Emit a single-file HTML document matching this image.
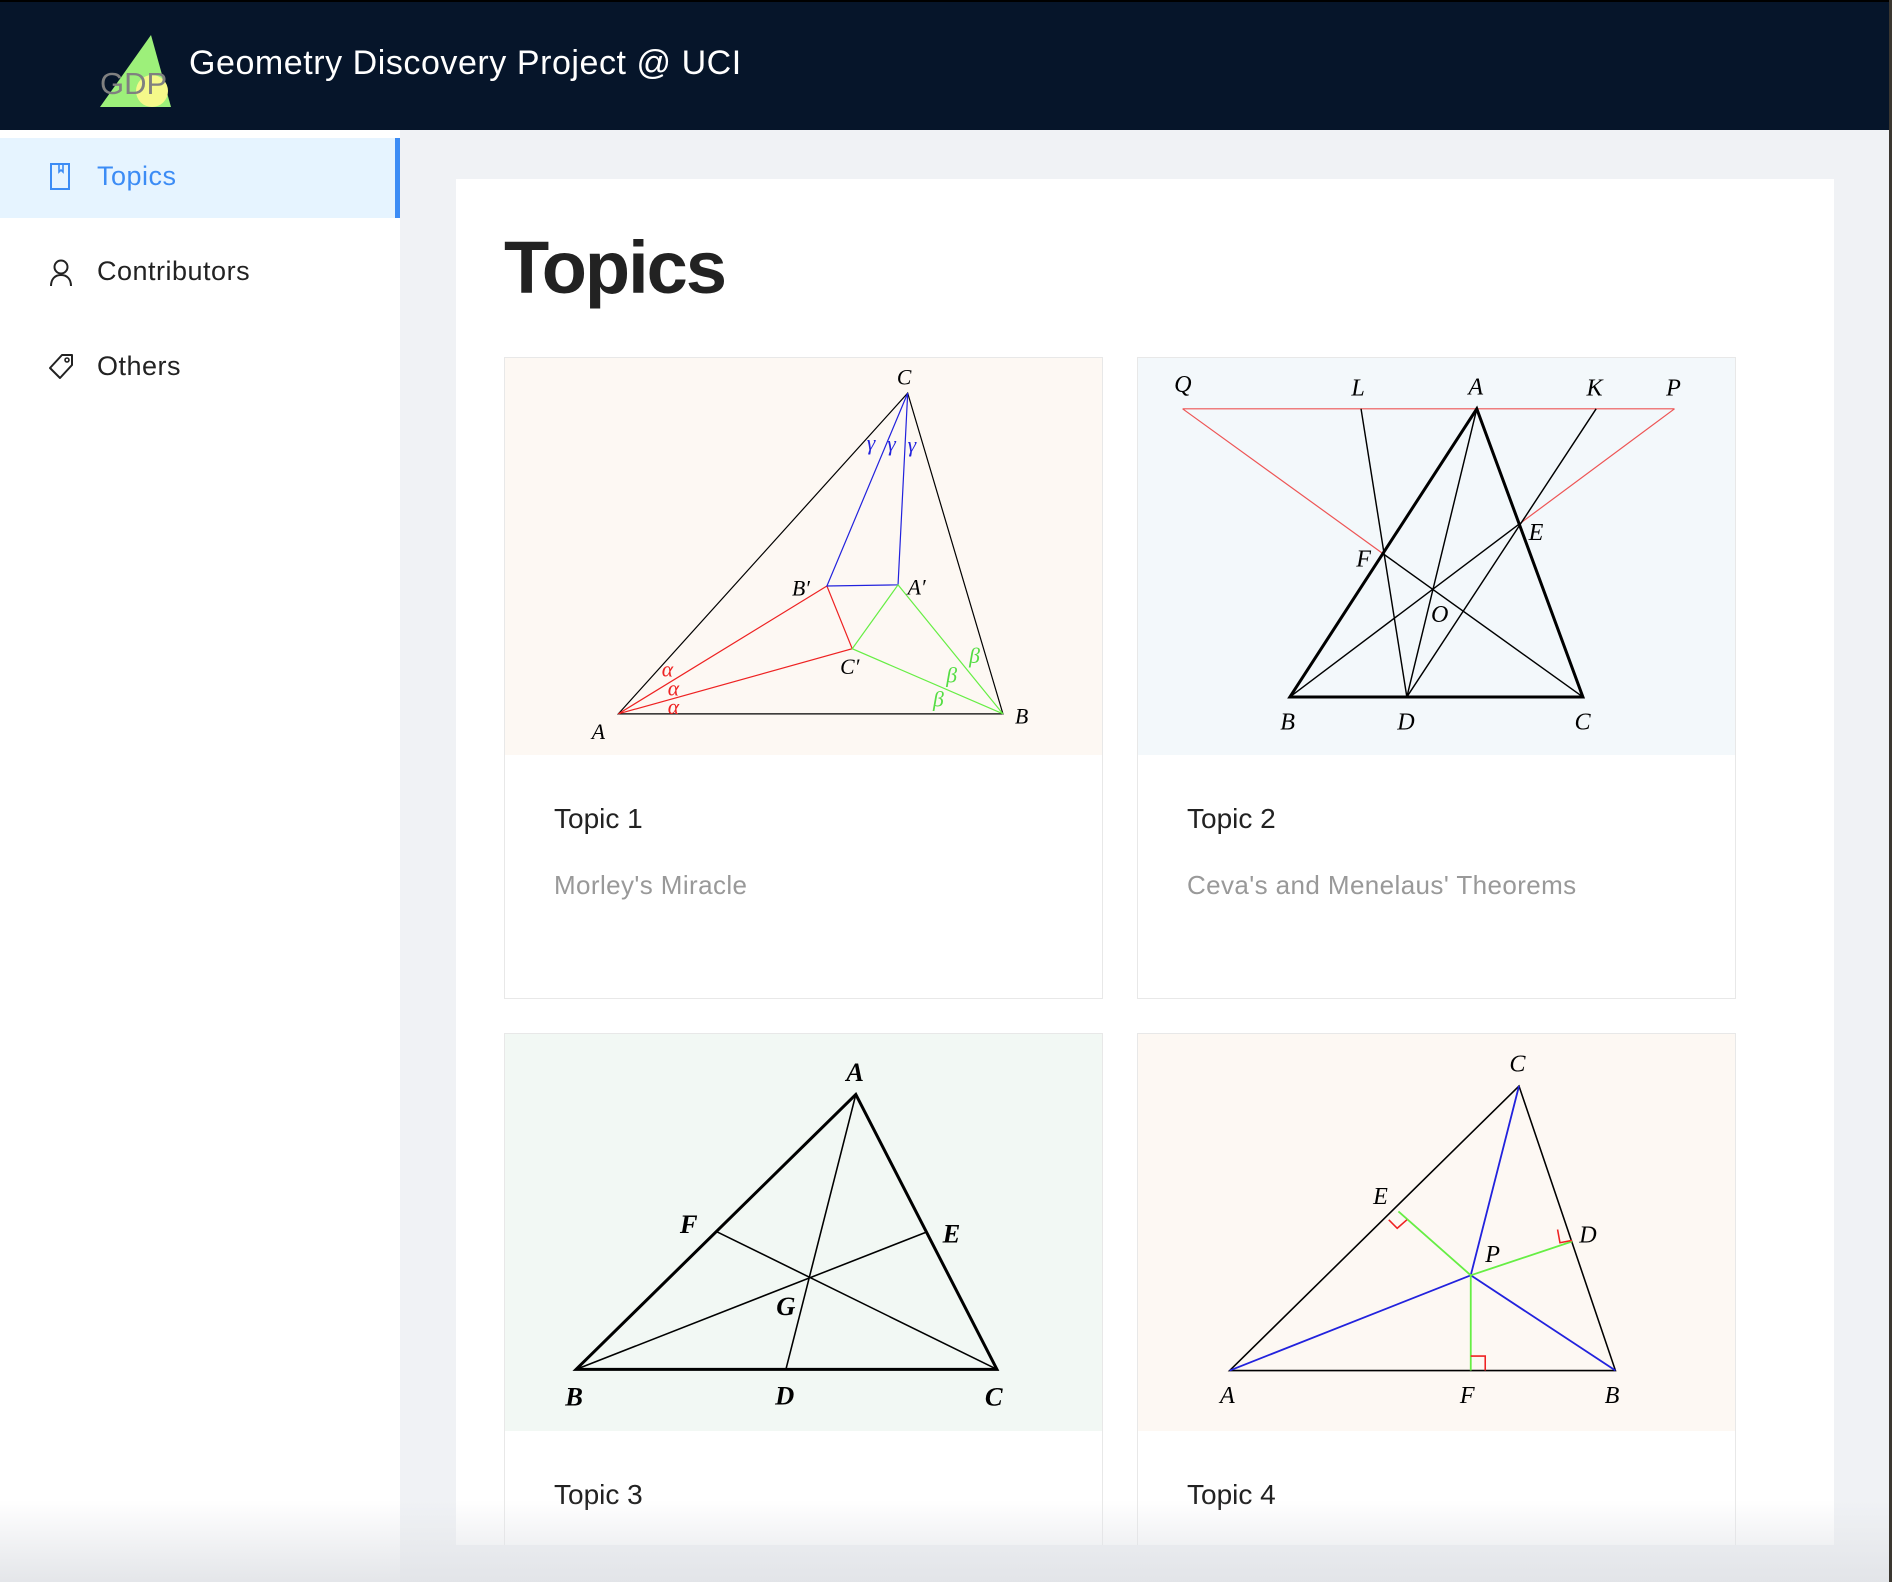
<!DOCTYPE html>
<html><head><meta charset="utf-8"><style>
*{margin:0;padding:0;box-sizing:border-box}
html,body{width:1892px;height:1582px;overflow:hidden}
body{background:#f0f2f5;font-family:"Liberation Sans",sans-serif;position:relative}
.hdr{position:absolute;left:0;top:0;width:1892px;height:130px;background:#06152a;border-top:2px solid #000}
.title{position:absolute;left:189px;top:42px;color:#fff;font-size:34px;letter-spacing:0.55px}
.side{position:absolute;left:0;top:130px;width:400px;height:1452px;background:#fff}
.sel{position:absolute;left:0;top:8px;width:400px;height:80px;background:#e6f4ff;border-right:5px solid #3c8cf5}
.item{position:absolute;left:97px;font-size:27px;letter-spacing:0.5px;color:#222}
.ico{position:absolute;left:48px}
.main{position:absolute;left:456px;top:179px;width:1378px;height:1366px;background:#fff;overflow:hidden}
h1{position:absolute;left:48px;top:46px;font-size:74px;font-weight:bold;color:#222;letter-spacing:-2px}
.card{position:absolute;width:599px;height:642px;border:1px solid #e8e8e8;background:#fff;overflow:hidden}
.card svg{display:block}
.ct{position:absolute;left:49px;top:445px;font-size:28px;color:#222}
.cd{position:absolute;left:49px;top:512px;font-size:26px;letter-spacing:0.4px;color:#999}
text{font-family:"Liberation Serif",serif;font-style:italic}
.fade{position:absolute;left:0;top:1500px;width:1892px;height:82px;background:linear-gradient(rgba(230,232,236,0),rgba(225,227,231,0.9))}
</style></head><body>
<div class="hdr">
<svg style="position:absolute;left:90px;top:20px" width="100" height="100" viewBox="90 20 100 100">
<polygon points="151,33 100,105 171,105" fill="#9df07a"/>
<circle cx="152" cy="89" r="16" fill="#f5f98a"/>
<text x="100" y="92" style="font-family:'Liberation Sans',sans-serif;font-style:normal" font-size="31" fill="#808080">GDP</text>
</svg>
<div class="title">Geometry Discovery Project @ UCI</div>
</div>
<div class="side">
<div class="sel"></div>
<svg class="ico" style="top:32px" width="26" height="30" viewBox="0 0 26 30"><rect x="3" y="2" width="18" height="25" fill="none" stroke="#3c8cf5" stroke-width="2"/><path d="M11 2v8l2-2 2 2V2" fill="none" stroke="#3c8cf5" stroke-width="1.6"/></svg>
<div class="item" style="top:31px;color:#3c8cf5">Topics</div>
<svg class="ico" style="top:128px" width="26" height="30" viewBox="0 0 26 30"><circle cx="13" cy="9" r="6.5" fill="none" stroke="#222" stroke-width="2"/><path d="M3 28c0-7 4-11 10-11s10 4 10 11" fill="none" stroke="#222" stroke-width="2"/></svg>
<div class="item" style="top:126px">Contributors</div>
<svg class="ico" style="top:222px" width="28" height="30" viewBox="0 0 28 30"><path d="M14 3h10v10L12 26 2 16Z" fill="none" stroke="#222" stroke-width="2" stroke-linejoin="round"/><circle cx="19" cy="8" r="2" fill="none" stroke="#222" stroke-width="1.6"/></svg>
<div class="item" style="top:221px">Others</div>
</div>
<div class="main">
<h1>Topics</h1>
<div class="card" style="left:48px;top:178px">
<svg width="598" height="397" viewBox="0 0 496 329" style="background:#fdf8f3">
<g fill="none" stroke-width="1">
<polygon points="94,295 413,295 334,29" stroke="#000"/>
<path d="M94,295L267,189L288,241Z" stroke="#e22"/>
<path d="M334,29L267,189L326,188Z" stroke="#22d"/>
<path d="M413,295L326,188L288,241Z" stroke="#6e4"/>
</g>
<g font-size="18"><text x="325" y="22">C</text><text x="72" y="316">A</text><text x="423" y="303">B</text><text x="238" y="197">B′</text><text x="334" y="196">A′</text><text x="278" y="262">C′</text></g>
<g font-size="18" fill="#e22"><text x="130" y="264">α</text><text x="135" y="280">α</text><text x="135" y="295">α</text></g>
<g font-size="18" fill="#5d4"><text x="385" y="253">β</text><text x="366" y="269">β</text><text x="355" y="289">β</text></g>
<g font-size="18" fill="#22d"><text x="300" y="76">γ</text><text x="317" y="77">γ</text><text x="334" y="78">γ</text></g>
</svg>
<div class="ct">Topic 1</div><div class="cd">Morley's Miracle</div>
</div>
<div class="card" style="left:681px;top:178px">
<svg width="598" height="397" viewBox="0 0 496 329" style="background:#f3f8fb">
<g fill="none">
<path d="M37,42H445M37,42L203,162M445,42L317,137" stroke="#e55" stroke-width="1"/>
<polygon points="281,42 126,281 369,281" stroke="#000" stroke-width="2.5"/>
<path d="M281,42L223,281M126,281L317,137M369,281L203,162M185,42L223,281M380,42L223,281" stroke="#000" stroke-width="1.2"/>
</g>
<g font-size="20"><text x="30" y="28">Q</text><text x="177" y="31">L</text><text x="274" y="30">A</text><text x="372" y="31">K</text><text x="438" y="31">P</text><text x="181" y="173">F</text><text x="324" y="151">E</text><text x="243" y="219">O</text><text x="118" y="308">B</text><text x="215" y="308">D</text><text x="362" y="308">C</text></g>
</svg>
<div class="ct">Topic 2</div><div class="cd">Ceva's and Menelaus' Theorems</div>
</div>
<div class="card" style="left:48px;top:854px">
<svg width="598" height="397" viewBox="0 0 496 329" style="background:#f2f8f4">
<g fill="none" stroke="#000">
<polygon points="291,50 59,278 408,278" stroke-width="2.5"/>
<path d="M291,50L233,278M59,278L350,164M408,278L176,164" stroke-width="1.3"/>
</g>
<g font-size="22" font-weight="bold"><text x="283" y="39">A</text><text x="145" y="165">F</text><text x="363" y="173">E</text><text x="225" y="233">G</text><text x="50" y="308">B</text><text x="224" y="307">D</text><text x="398" y="308">C</text></g>
</svg>
<div class="ct">Topic 3</div>
</div>
<div class="card" style="left:681px;top:854px">
<svg width="598" height="397" viewBox="0 0 496 329" style="background:#fdf8f3">
<g fill="none">
<polygon points="76,279 396,279 316,43" stroke="#000" stroke-width="1.3"/>
<path d="M276,200L76,279M276,200L396,279M276,200L316,43" stroke="#22d" stroke-width="1.5"/>
<path d="M276,200L216,147M276,200L360,172M276,200L276,279" stroke="#6e4" stroke-width="1.5"/>
<path d="M276,267h12v12M208,154l7,7l8,-7M348,162l2,11l10,-2" stroke="#e22" stroke-width="1.3"/>
</g>
<g font-size="20"><text x="308" y="31">C</text><text x="195" y="141">E</text><text x="366" y="173">D</text><text x="288" y="189">P</text><text x="68" y="306">A</text><text x="267" y="306">F</text><text x="387" y="306">B</text></g>
</svg>
<div class="ct">Topic 4</div>
</div>
</div>
<div class="fade"></div>
<div style="position:absolute;left:1889px;top:0;width:3px;height:1582px;background:#3a3630"></div>
</body></html>
